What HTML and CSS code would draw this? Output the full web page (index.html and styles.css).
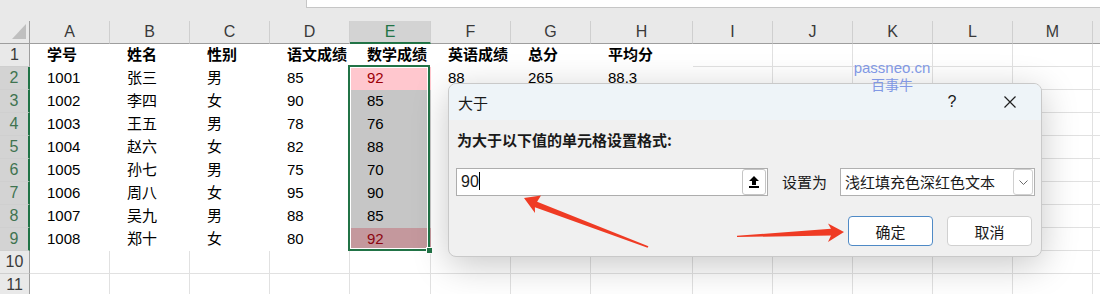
FILE: index.html
```html
<!DOCTYPE html>
<html lang="zh-CN">
<head>
    <meta charset="UTF-8">
    <title>条件格式 - 大于</title>
    <link rel="stylesheet" href="styles.css">
</head>
<body>
    <div class="topband"><div class="formula"></div></div>

    <div class="sheet">
        <div class="corner"><svg width="29" height="22"><polygon points="26,3 26,18 12,18" fill="#bfbfbf"/></svg></div>
        <div class="ch">A</div><div class="ch">B</div><div class="ch">C</div><div class="ch">D</div>
        <div class="ch on">E</div><div class="ch">F</div><div class="ch">G</div><div class="ch">H</div>
        <div class="ch">I</div><div class="ch">J</div><div class="ch">K</div><div class="ch">L</div>
        <div class="ch">M</div><div class="ch"></div>

        <div class="rh">1</div>
        <div class="c f b">学号</div><div class="c f b">姓名</div><div class="c f b">性别</div><div class="c f b">语文成绩</div>
        <div class="c f b">数学成绩</div><div class="c f b">英语成绩</div><div class="c f b">总分</div><div class="c f b">平均分</div>
        <div class="c"></div><div class="c"></div><div class="c"></div><div class="c"></div><div class="c"></div><div class="c"></div>

        <div class="rh on">2</div>
        <div class="c f">1001</div><div class="c f">张三</div><div class="c f">男</div><div class="c f">85</div>
        <div class="c f pk">92</div><div class="c f">88</div><div class="c f">265</div><div class="c f">88.3</div>
        <div class="c"></div><div class="c"></div><div class="c"></div><div class="c"></div><div class="c"></div><div class="c"></div>

        <!-- F3:H9 sit under the dialog -->
        <div class="rh on">3</div>
        <div class="c f">1002</div><div class="c f">李四</div><div class="c f">女</div><div class="c f">90</div>
        <div class="c f sel">85</div><div class="c f"></div><div class="c f"></div><div class="c f"></div>
        <div class="c"></div><div class="c"></div><div class="c"></div><div class="c"></div><div class="c"></div><div class="c"></div>

        <div class="rh on">4</div>
        <div class="c f">1003</div><div class="c f">王五</div><div class="c f">男</div><div class="c f">78</div>
        <div class="c f sel">76</div><div class="c f"></div><div class="c f"></div><div class="c f"></div>
        <div class="c"></div><div class="c"></div><div class="c"></div><div class="c"></div><div class="c"></div><div class="c"></div>

        <div class="rh on">5</div>
        <div class="c f">1004</div><div class="c f">赵六</div><div class="c f">女</div><div class="c f">82</div>
        <div class="c f sel">88</div><div class="c f"></div><div class="c f"></div><div class="c f"></div>
        <div class="c"></div><div class="c"></div><div class="c"></div><div class="c"></div><div class="c"></div><div class="c"></div>

        <div class="rh on">6</div>
        <div class="c f">1005</div><div class="c f">孙七</div><div class="c f">男</div><div class="c f">75</div>
        <div class="c f sel">70</div><div class="c f"></div><div class="c f"></div><div class="c f"></div>
        <div class="c"></div><div class="c"></div><div class="c"></div><div class="c"></div><div class="c"></div><div class="c"></div>

        <div class="rh on">7</div>
        <div class="c f">1006</div><div class="c f">周八</div><div class="c f">女</div><div class="c f">95</div>
        <div class="c f sel">90</div><div class="c f"></div><div class="c f"></div><div class="c f"></div>
        <div class="c"></div><div class="c"></div><div class="c"></div><div class="c"></div><div class="c"></div><div class="c"></div>

        <div class="rh on">8</div>
        <div class="c f">1007</div><div class="c f">吴九</div><div class="c f">男</div><div class="c f">88</div>
        <div class="c f sel">85</div><div class="c f"></div><div class="c f"></div><div class="c f"></div>
        <div class="c"></div><div class="c"></div><div class="c"></div><div class="c"></div><div class="c"></div><div class="c"></div>

        <div class="rh on">9</div>
        <div class="c f">1008</div><div class="c f">郑十</div><div class="c f">女</div><div class="c f">80</div>
        <div class="c f pks">92</div><div class="c f"></div><div class="c f"></div><div class="c f"></div>
        <div class="c"></div><div class="c"></div><div class="c"></div><div class="c"></div><div class="c"></div><div class="c"></div>

        <div class="rh">10</div>
        <div class="c"></div><div class="c"></div><div class="c"></div><div class="c"></div><div class="c"></div><div class="c"></div><div class="c"></div>
        <div class="c"></div><div class="c"></div><div class="c"></div><div class="c"></div><div class="c"></div><div class="c"></div><div class="c"></div>

        <div class="rh">11</div>
        <div class="c"></div><div class="c"></div><div class="c"></div><div class="c"></div><div class="c"></div><div class="c"></div><div class="c"></div>
        <div class="c"></div><div class="c"></div><div class="c"></div><div class="c"></div><div class="c"></div><div class="c"></div><div class="c"></div>
    </div>

    <!-- selected range E2:E9 -->
    <div class="selbox"></div>
    <div class="handle"></div>

    <div class="dlg">
        <div class="dlg-title">
            <span class="name">大于</span>
            <span class="help">?</span>
            <span class="close"><svg width="12" height="12"><path d="M0.5 0.5 L11.5 11.5 M11.5 0.5 L0.5 11.5" stroke="#1f1f1f" stroke-width="1.2"/></svg></span>
        </div>
        <div class="dlg-body">
            <div class="label">为大于以下值的单元格设置格式:</div>
            <div class="row">
                <div class="field">
                    <span class="val">90<i class="caret"></i></span>
                    <span class="pick"><svg width="10" height="12"><polygon points="5,0 10,5 7,5 7,9 3,9 3,5 0,5" fill="#000"/><rect x="0" y="10" width="10" height="2" fill="#000"/></svg></span>
                </div>
                <span class="setlbl">设置为</span>
                <div class="combo">
                    <span>浅红填充色深红色文本</span>
                    <span class="drop"><svg width="9" height="5"><polyline points="0.5,0.5 4.5,4.5 8.5,0.5" fill="none" stroke="#6b6b6b" stroke-width="1"/></svg></span>
                </div>
            </div>
            <div class="btns">
                <button class="btn ok">确定</button>
                <button class="btn">取消</button>
            </div>
        </div>
    </div>

    <div class="mark">passneo.cn<br><span>百事牛</span></div>

    <svg class="arrows" width="1100" height="294">
        <polygon points="524,198 541,195.5 537.1,201.7 648.4,246.3 647.6,247.7 534.9,207.3 535,213" fill="#ef3b24"/>
        <polygon points="844,232 828,223.5 831,228.8 737,235.8 737,237 831,235.6 828,242" fill="#ef3b24"/>
    </svg>
</body>
</html>
```

FILE: styles.css
```css
body {
    margin: 0;
    width: 1100px;
    height: 294px;
    overflow: hidden;
    position: relative;
    background: #fff;
    font-family: "Liberation Sans", "Noto Sans CJK SC", sans-serif;
    color: #000;
}
.topband {
    height: 21px;
    background: #e9e9e9;
}
.formula {
    margin-left: 306px;
    height: 7px;
    background: #fff;
    border-left: 1px solid #c6c6c6;
    border-bottom: 1px solid #c6c6c6;
}
.sheet {
    display: grid;
    grid-template-columns: 30px 80px 80px 80px 80px 81px 80px 80px 102px 80px 80px 80px 80px 80px 1fr;
    grid-template-rows: repeat(12, 23px);
}
.corner {
    background: #e9e9e9;
    border-right: 1px solid #9e9e9e;
    border-bottom: 1px solid #9e9e9e;
    box-sizing: border-box;
}
.corner svg {
    display: block;
}
.ch {
    background: #e9e9e9;
    border-right: 1px solid #cfcfcf;
    border-bottom: 1px solid #9e9e9e;
    box-sizing: border-box;
    text-align: center;
    font-size: 16px;
    line-height: 22px;
    color: #3a3a3a;
}
.ch.on {
    background: #d3d3d3;
    color: #217346;
    border-bottom: 2px solid #217346;
}
.rh {
    background: #e9e9e9;
    border-right: 1px solid #9e9e9e;
    border-bottom: 1px solid #cfcfcf;
    box-sizing: border-box;
    text-align: center;
    font-size: 16px;
    line-height: 22px;
    color: #3a3a3a;
}
.rh.on {
    background: #d3d3d3;
    color: #3f7350;
    border-right: 2px solid #217346;
}
.c {
    border-right: 1px solid #e1e1e1;
    border-bottom: 1px solid #e1e1e1;
    box-sizing: border-box;
    padding-left: 17px;
    font-family: "Liberation Sans Narrow", "Liberation Sans", "Noto Sans CJK SC", sans-serif;
    font-size: 15px;
    line-height: 22px;
    white-space: nowrap;
    overflow: hidden;
}
.c.f {
    border-color: transparent;
}
.c.b {
    font-weight: bold;
}
.c.pk {
    background: #ffc7ce;
    color: #9c0006;
}
.c.sel {
    background: #c6c6c6;
}
.c.pks {
    background: #c4989d;
    color: #8c0610;
}
.selbox {
    position: absolute;
    left: 348px;
    top: 65px;
    width: 82px;
    height: 186px;
    box-sizing: border-box;
    border: 2px solid #217346;
    box-shadow: inset 0 0 0 1px #fff;
}
.handle {
    position: absolute;
    left: 426px;
    top: 247px;
    width: 5px;
    height: 5px;
    background: #217346;
    border: 1px solid #fff;
}
.dlg {
    position: absolute;
    left: 448px;
    top: 83px;
    width: 594px;
    height: 174px;
    box-sizing: border-box;
    border: 1px solid #c9c9c9;
    border-radius: 8px;
    background: #f0f0f0;
    box-shadow: 0 8px 36px rgba(0, 0, 0, 0.22);
    overflow: hidden;
    display: flex;
    flex-direction: column;
    font-family: "Noto Sans CJK SC", sans-serif;
    font-size: 15px;
    color: #1a1a1a;
}
.dlg-title {
    height: 36px;
    flex: none;
    background: #eef4f8;
    display: flex;
    align-items: center;
    padding-left: 9px;
    padding-right: 8px;
}
.dlg-title .name {
    flex: 1;
}
.help {
    width: 46px;
    text-align: center;
    font-family: "Liberation Sans", sans-serif;
    font-size: 16px;
}
.close {
    width: 46px;
    margin-left: 12px;
    display: flex;
    justify-content: center;
}
.dlg-body {
    padding: 10px 8px 0 7px;
}
.label {
    font-weight: bold;
    line-height: 20px;
    padding-left: 1px;
}
.row {
    display: flex;
    align-items: center;
    margin-top: 18px;
}
.field {
    flex: none;
    width: 312px;
    height: 28px;
    box-sizing: border-box;
    border: 1px solid #adadad;
    background: #fff;
    display: flex;
    align-items: center;
}
.val {
    flex: 1;
    padding-left: 4px;
    font-family: "Liberation Sans", sans-serif;
    font-size: 16px;
    line-height: 20px;
}
.caret {
    display: inline-block;
    width: 1px;
    height: 18px;
    background: #000;
    vertical-align: -3px;
}
.pick {
    width: 22px;
    height: 24px;
    margin-right: 1px;
    border: 1px solid #c5c5c5;
    border-radius: 3px;
    background: #fff;
    display: flex;
    align-items: center;
    justify-content: center;
}
.setlbl {
    flex: none;
    margin-left: 14px;
    line-height: 20px;
    white-space: nowrap;
}
.combo {
    flex: none;
    margin-left: 13px;
    width: 195px;
    height: 28px;
    box-sizing: border-box;
    border: 1px solid #b0b0b0;
    background: #fff;
    display: flex;
    align-items: center;
    padding-left: 4px;
    line-height: 20px;
    white-space: nowrap;
}
.drop {
    margin-left: auto;
    margin-right: 1px;
    width: 18px;
    height: 24px;
    border: 1px solid #d0d0d0;
    border-radius: 3px;
    display: flex;
    align-items: center;
    justify-content: center;
}
.btns {
    display: flex;
    justify-content: flex-end;
    gap: 14px;
    margin-top: 20px;
    margin-right: 1px;
}
.btn {
    width: 85px;
    height: 30px;
    border: 1px solid #d0d0d0;
    border-radius: 4px;
    background: #fff;
    font-family: "Noto Sans CJK SC", sans-serif;
    font-size: 15px;
    color: #1a1a1a;
    padding: 0;
}
.btn.ok {
    border-color: #4f8ac6;
}
.mark {
    position: absolute;
    left: 852px;
    top: 60px;
    width: 80px;
    text-align: center;
    font-family: "Liberation Sans", sans-serif;
    font-size: 15px;
    line-height: 16px;
    color: #8198e4;
}
.mark span {
    font-family: "Noto Sans CJK SC", sans-serif;
    font-size: 14px;
}
.arrows {
    position: absolute;
    left: 0;
    top: 0;
}
```
